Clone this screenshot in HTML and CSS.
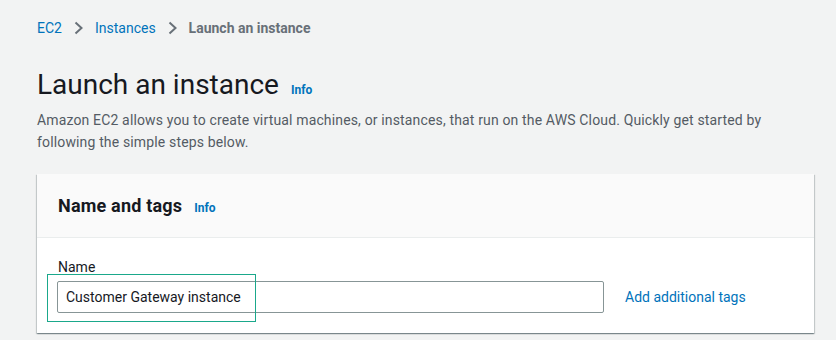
FILE: index.html
```html
<!DOCTYPE html>
<html>
<head>
<meta charset="utf-8">
<link rel="stylesheet" href="styles.css">
</head>
<body>
<div class="page">
  <nav class="crumbs">
    <a class="crumb-link">EC2</a>
    <svg class="chev" width="10" height="16" viewBox="0 0 10 16"><path d="M1.5 2.5l6 5.5-6 5.5" fill="none" stroke="#687078" stroke-width="2"/></svg>
    <a class="crumb-link">Instances</a>
    <svg class="chev" width="10" height="16" viewBox="0 0 10 16"><path d="M1.5 2.5l6 5.5-6 5.5" fill="none" stroke="#687078" stroke-width="2"/></svg>
    <span class="crumb-current">Launch an instance</span>
  </nav>
  <div class="head">
    <h1 class="title">Launch an instance</h1>
    <a class="info">Info</a>
  </div>
  <p class="desc">Amazon EC2 allows you to create virtual machines, or instances, that run on the AWS Cloud. Quickly get started by following the simple steps below.</p>
  <section class="card">
    <div class="card-head">
      <h2 class="card-title">Name and tags</h2>
      <a class="info">Info</a>
    </div>
    <div class="card-body">
      <label class="label">Name</label>
      <div class="row">
        <div class="input">Customer Gateway instance</div>
        <a class="link">Add additional tags</a>
      </div>
      <div class="highlight"></div>
    </div>
  </section>
</div>
</body>
</html>
```
FILE: styles.css
```css
html, body { margin: 0; padding: 0; }
body {
  background: #f2f3f3;
  font-family: Roboto, "Open Sans", sans-serif;
  color: #16191f;
  width: 836px;
  height: 340px;
  overflow: hidden;
}
.page { padding: 0 22px 0 37px; }
.crumbs {
  display: flex;
  align-items: center;
  height: 56px;
  font-size: 14px;
}
.crumb-link { color: #0073bb; }
.chev { margin: 0 11px 0 12px; }
.crumb-current { color: #687078; font-weight: bold; }
.head { display: flex; align-items: baseline; gap: 12px; margin-top: 9px; }
.title { margin: 0; font-size: 28px; font-weight: normal; line-height: 40px; }
.info { color: #0073bb; font-size: 12px; font-weight: bold; }
.desc {
  margin: 4px 0 0;
  font-size: 14px;
  line-height: 22px;
  color: #545b64;
  width: 760px;
  letter-spacing: 0.15px;
}
.card {
  margin-top: 21px;
  background: #fff;
  box-shadow: 0 1px 1px 0 rgba(0,28,36,0.3), 1px 1px 1px 0 rgba(0,28,36,0.15), -1px 1px 1px 0 rgba(0,28,36,0.15);
  width: 777px;
}
.card-head {
  background: #fafafa;
  border-bottom: 1px solid #eaeded;
  height: 64px;
  display: flex;
  align-items: baseline;
  gap: 12px;
  padding-left: 21px;
  padding-top: 21px;
  box-sizing: border-box;
}
.card-title { margin: 0; font-size: 18px; line-height: 22px; font-weight: bold; letter-spacing: 0.2px; }
.card-body { position: relative; padding: 18px 20px 20px 20px; }
.label { display: block; font-size: 14px; line-height: 22px; padding-left: 1px; }
.row { display: flex; align-items: center; gap: 21px; margin-top: 3px; }
.input {
  width: 547px;
  height: 32px;
  box-sizing: border-box;
  border: 1px solid #879596;
  border-radius: 2px;
  padding: 0 8px;
  font-size: 14px;
  line-height: 30px;
}
.link { color: #0073bb; font-size: 14px; }
.highlight {
  position: absolute;
  left: 10px;
  top: 36px;
  width: 209px;
  height: 48px;
  border: 1px solid #1aa88b;
  box-sizing: border-box;
}
```
